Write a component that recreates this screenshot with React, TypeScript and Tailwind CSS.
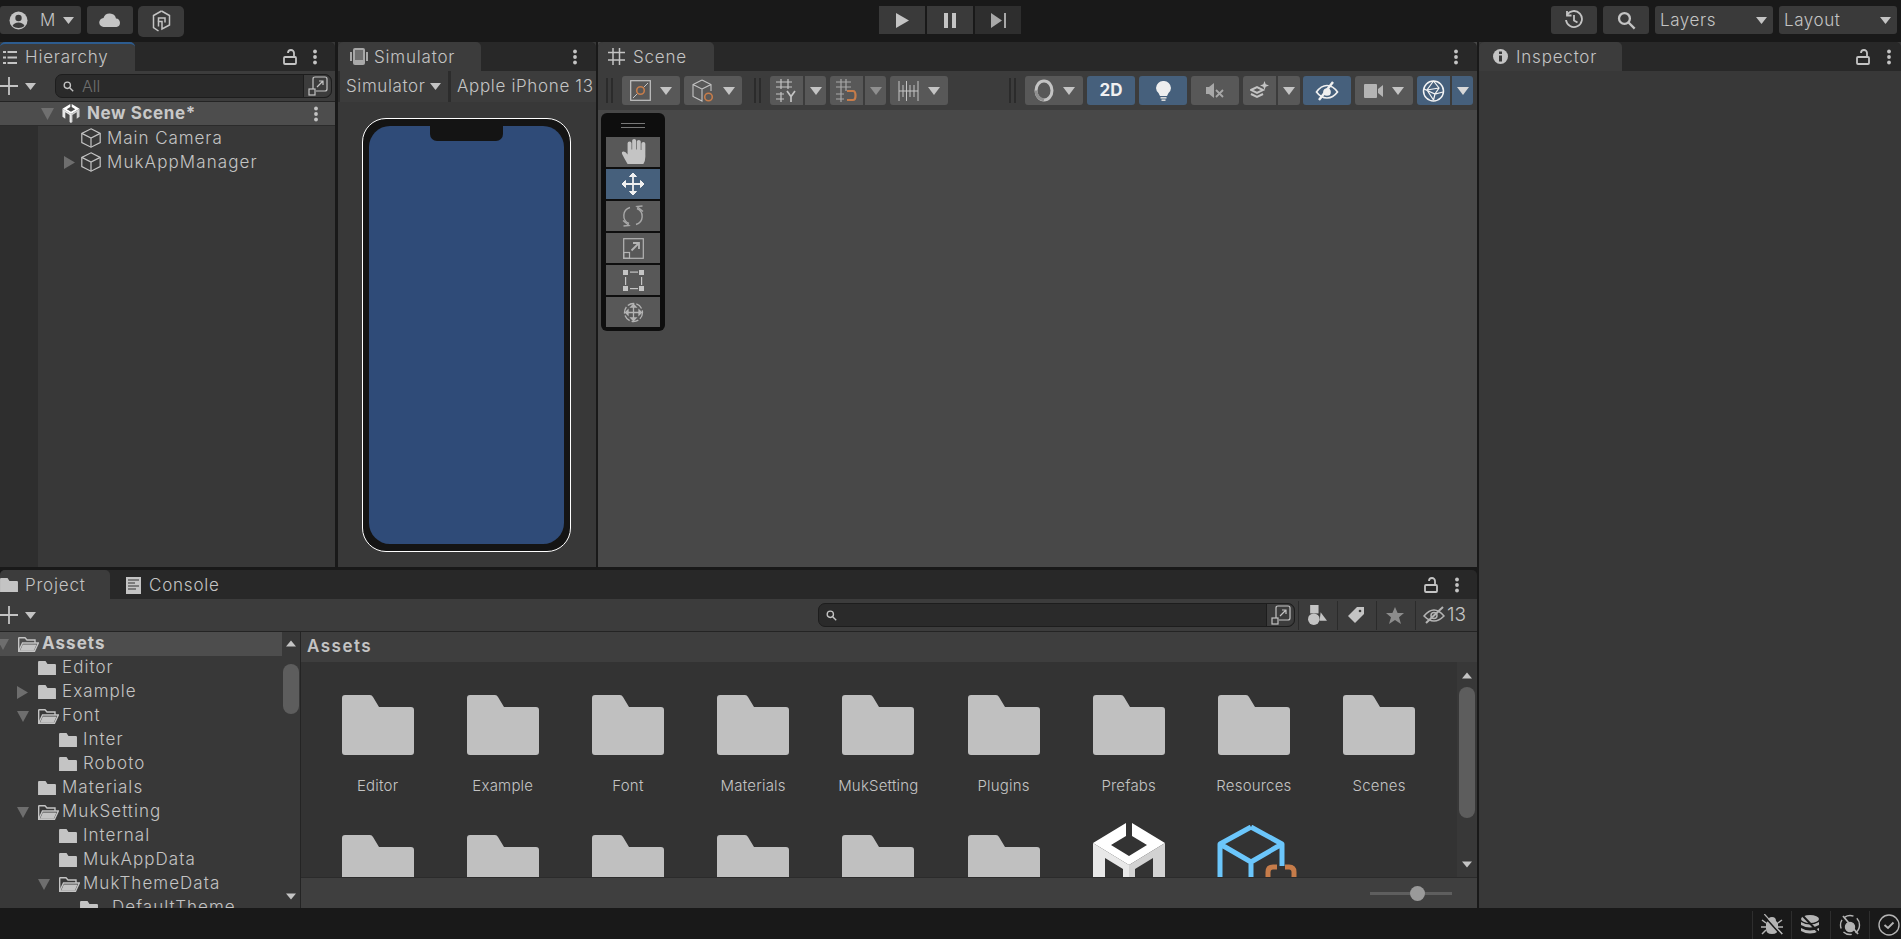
import React from 'react';

const Down = ({ c = '#c4c4c4', w = 11, h = 7, className = '' }: { c?: string; w?: number; h?: number; className?: string }) => (
  <svg width={w} height={h} viewBox="0 0 10 6" preserveAspectRatio="none" className={'shrink-0 ' + className}><path d="M0 0H10L5 6Z" fill={c} /></svg>
);
const Right = ({ c = '#6e6e6e' }: { c?: string }) => (
  <svg width="11" height="13" viewBox="0 0 11 13" className="shrink-0"><path d="M0 0V13L11 6.5Z" fill={c} /></svg>
);
const Lock = () => (
  <svg width="14" height="16" viewBox="0 0 14 16" fill="none" stroke="#c4c4c4" strokeWidth="1.8" className="shrink-0">
    <rect x="1" y="8" width="12" height="7" rx="1" />
    <path d="M11 8V4a3 3 0 0 0-6 0" />
  </svg>
);
const Dots = () => (
  <svg width="6" height="16" viewBox="0 0 6 16" fill="#c4c4c4" className="shrink-0">
    <circle cx="3" cy="2.5" r="1.9" /><circle cx="3" cy="8" r="1.9" /><circle cx="3" cy="13.5" r="1.9" />
  </svg>
);
const TabActions = ({ mr, lock = true, gap = 'gap-[16px]' }: { mr: string; lock?: boolean; gap?: string }) => (
  <div className={'ml-auto flex items-center ' + gap + ' ' + mr}>
    {lock && <Lock />}
    <Dots />
  </div>
);
const Plus = () => (
  <svg width="18" height="18" viewBox="0 0 18 18" stroke="#c4c4c4" strokeWidth="1.8" className="shrink-0"><path d="M0 9H18M9 0V18" /></svg>
);
const Folder = ({ s = 18 }: { s?: number }) => (
  <svg width={s} height={s * 0.83} viewBox="0 0 18 15" className="shrink-0">
    <path d="M0 1.2Q0 0 1 0H7.5L9.5 3H17Q18 3 18 4V14Q18 15 17 15H1Q0 15 0 14Z" fill="#c4c4c4" />
  </svg>
);
const FolderOpen = () => (
  <svg width="21" height="15" viewBox="0 0 21 15" fill="none" stroke="#c4c4c4" strokeWidth="1.4" className="shrink-0">
    <path d="M.7 14V1.2Q.7.7 1.3.7H7L9 3H17V6" />
    <path d="M.7 14.3 4.5 6H20.3L16.5 14.3Z" />
    <path d="M2 13.8 4.8 7.5H18.5L15.8 13.8Z" fill="#c4c4c4" stroke="none" />
  </svg>
);
const BigFolder = () => (
  <svg width="72" height="60" viewBox="0 0 72 60" className="shrink-0">
    <path d="M0 3Q0 0 3 0H28Q30 0 31 2L37 12H69Q72 12 72 15V57Q72 60 69 60H3Q0 60 0 57Z" fill="#c0c0c0" />
  </svg>
);
const Cube = () => (
  <svg width="20" height="20" viewBox="0 0 20 20" fill="none" stroke="#c4c4c4" strokeWidth="1.2" className="shrink-0">
    <path d="M10 .8 19.2 5.4V14.6L10 19.2.8 14.6V5.4Z" /><path d="M.8 5.4 10 10 19.2 5.4M10 10V19.2" />
  </svg>
);
const UnityLogo = ({ className = '' }: { className?: string }) => (
  <svg viewBox="0 0 72 80" className={className}>
    <path d="M0 20 33 0V13L18 22 36 33 54 22 39 13V0L72 20 36 42Z" fill="#fff" />
    <path d="M0 20 36 42V80L30 76V46L12 35V62L0 54Z" fill="#e8e8e8" />
    <path d="M72 20 36 42V80L42 76V46L60 35V62L72 54Z" fill="#d2d2d2" />
  </svg>
);
const Search = ({ s = 14 }: { s?: number }) => (
  <svg width={s} height={s} viewBox="0 0 14 14" fill="none" stroke="#c4c4c4" strokeWidth="1.7" className="shrink-0">
    <circle cx="5.5" cy="5.5" r="4" /><path d="M8.5 8.5 13 13" />
  </svg>
);
const Expand = () => (
  <svg width="20" height="20" viewBox="0 0 20 20" fill="none" stroke="#c4c4c4" strokeWidth="1.2" className="shrink-0">
    <path d="M5 13V3Q5 1 7 1H17Q19 1 19 3V13Q19 15 17 15H8" /><rect x="1" y="13" width="6" height="6" /><path d="M9 11 15 5M11 5H15V9" />
  </svg>
);
const SearchField = ({ w, text }: { w: string; text?: string }) => (
  <div className={'flex h-[24px] rounded-[7px] border border-[#1d1d1d] bg-[#2a2a2a] ' + w}>
    <div className="flex min-w-0 flex-1 items-center gap-[8px] border-r border-[#1d1d1d] pl-[7px]">
      <Search s={11} />
      {text && <span className="text-[16px] text-[#6f6f6f]">{text}</span>}
    </div>
    <div className="flex w-[27px] items-center justify-center rounded-r-[7px] bg-[#3c3c3c]"><Expand /></div>
  </div>
);
const Tab = ({ w, icon, label, accent = false, pt = 'pt-[2px]' }: { w: string; icon: React.ReactNode; label: string; accent?: boolean; pt?: string }) => (
  <div className={'relative flex h-full items-center rounded-t-[5px] bg-[#3c3c3c] ' + w + ' ' + (accent ? 'border-t-2 border-[#2d5c8f]' : '')}>
    {icon}
    <span className={'text-[17px] tracking-[0.8px] text-[#c4c4c4] ' + pt}>{label}</span>
  </div>
);
const TBtn = ({ w, blue = false, children, rounded = 'rounded-[3px]' }: { w: string; blue?: boolean; children?: React.ReactNode; rounded?: string }) => (
  <div className={'flex h-[29px] shrink-0 items-center justify-center gap-[9px] ' + rounded + ' ' + w + ' ' + (blue ? 'bg-[#46607c]' : 'bg-[#585858]')}>{children}</div>
);
const Grip = ({ className = '' }: { className?: string }) => (
  <div className={'flex h-[25px] w-[7px] shrink-0 justify-between ' + className}>
    <div className="w-[2px] bg-[#2b2b2b]" /><div className="w-[2px] bg-[#2b2b2b]" />
  </div>
);
const TopBtn = ({ w, children, className = '' }: { w: string; children?: React.ReactNode; className?: string }) => (
  <div className={'flex h-[28px] shrink-0 items-center rounded-[3px] bg-[#3a3a3a] ' + w + ' ' + className}>{children}</div>
);
const ProjRow = ({ indent, arrow, open, label, bold, gap = 'ml-[6px]' }: { indent: string; arrow?: 'r' | 'd'; open?: boolean; label: string; bold?: boolean; gap?: string }) => (
  <div className={'flex h-[24px] shrink-0 items-center ' + indent + ' ' + (bold ? 'bg-[#4d4d4d]' : '')}>
    <div className="flex w-[21px] shrink-0 items-center">
      {arrow === 'r' && <Right />}
      {arrow === 'd' && <Down c="#6e6e6e" w={12} h={11} />}
    </div>
    {open ? <FolderOpen /> : <Folder />}
    <span className={'whitespace-nowrap text-[17px] tracking-[1.05px] ' + (open ? 'ml-[3px] ' : gap + ' ') + (bold ? 'font-bold text-[#c8c8c8]' : 'text-[#c4c4c4]')}>{label}</span>
  </div>
);
const OverlayBtn = ({ blue = false, children }: { blue?: boolean; children: React.ReactNode }) => (
  <div className={'flex h-[30px] w-[54px] items-center justify-center ' + (blue ? 'bg-[#46607c]' : 'bg-[#585858]')}>{children}</div>
);
const FolderCell = ({ label }: { label?: string }) => (
  <div className="flex w-[125.2px] shrink-0 flex-col items-center">
    <BigFolder />
    {label && <span className="mt-[20px] whitespace-nowrap text-[15px] tracking-[0.2px] text-[#c4c4c4]">{label}</span>}
  </div>
);
const StatusIcon = ({ children }: { children: React.ReactNode }) => (
  <div className="flex h-[28px] w-[39px] items-center justify-center border-l border-[#2e2e2e]">{children}</div>
);

export default function App() {
  return (
    <div className="flex h-[939px] w-[1901px] flex-col overflow-hidden bg-[#191919] font-['Inter','Liberation_Sans',sans-serif] font-[350]">
      {/* main toolbar */}
      <div className="flex h-[42px] shrink-0 items-start pt-[6px]">
        <TopBtn w="w-[81px]" className="pl-[9px]">
          <svg width="19" height="19" viewBox="0 0 19 19" className="shrink-0">
            <circle cx="9.5" cy="9.5" r="9" fill="#c4c4c4" /><circle cx="9.5" cy="7" r="3.2" fill="#3a3a3a" /><path d="M3.5 15Q5 11.5 9.5 11.5T15.5 15Q13 17 9.5 17T3.5 15Z" fill="#3a3a3a" />
          </svg>
          <span className="ml-[12px] pt-[1px] text-[17px] text-[#c4c4c4]">M</span>
          <Down className="ml-[8px]" />
        </TopBtn>
        <TopBtn w="w-[46px]" className="ml-[6px] justify-center">
          <svg width="22" height="14" viewBox="0 0 22 14"><path d="M5 14A4.5 4.5 0 0 1 4.5 5 6.5 6.5 0 0 1 17 5.5 4.3 4.3 0 0 1 17.5 14Z" fill="#c4c4c4" /></svg>
        </TopBtn>
        <TopBtn w="w-[46px]" className="ml-[5px] h-[31px] justify-center rounded-[5px]">
          <svg width="19" height="23" viewBox="0 0 19 23" fill="none" stroke="#c4c4c4" strokeWidth="1.5">
            <path d="M9.5 1 17.5 5.5V15L10 19V11.5H6.5V16.5" /><path d="M6.5 21 1.5 17.5V5.5L9.5 1" /><path d="M6.5 11.5V8H13V12.5" />
          </svg>
        </TopBtn>
        <div className="ml-[695px] flex gap-[2px]">
          <TopBtn w="w-[46px]" className="justify-center rounded-none"><svg width="15" height="15" viewBox="0 0 15 15"><path d="M1 0V15L14 7.5Z" fill="#c4c4c4" /></svg></TopBtn>
          <TopBtn w="w-[46px]" className="justify-center rounded-none"><svg width="12" height="15" viewBox="0 0 12 15" fill="#c4c4c4"><rect width="4" height="15" /><rect x="8" width="4" height="15" /></svg></TopBtn>
          <div className="flex h-[28px] w-[46px] shrink-0 items-center justify-center bg-[#2e2e2e]"><svg width="15" height="15" viewBox="0 0 15 15" fill="#a8a8a8"><path d="M0 0V15L11 7.5Z" /><rect x="13" width="2" height="15" /></svg></div>
        </div>
        <TopBtn w="w-[46px]" className="ml-[530px] justify-center">
          <svg width="20" height="20" viewBox="0 0 20 20" fill="none" stroke="#c4c4c4" strokeWidth="1.8">
            <path d="M3 5A8 8 0 1 1 2 10" /><path d="M3 1V5.5H7.5" /><path d="M10 5V10.5L13.5 12.5" />
          </svg>
        </TopBtn>
        <TopBtn w="w-[46px]" className="ml-[6px] justify-center"><Search s={19} /></TopBtn>
        <TopBtn w="w-[118px]" className="ml-[6px] justify-between pl-[5px] pr-[6px]">
          <span className="pt-[1px] text-[17px] tracking-[0.6px] text-[#c4c4c4]">Layers</span><Down />
        </TopBtn>
        <TopBtn w="w-[118px]" className="ml-[6px] justify-between pl-[5px] pr-[6px]">
          <span className="pt-[1px] text-[17px] tracking-[0.6px] text-[#c4c4c4]">Layout</span><Down />
        </TopBtn>
      </div>

      <div className="flex h-[866px] shrink-0">
        <div className="flex w-[1477px] shrink-0 flex-col gap-[3px]">
          <div className="flex h-[525px] shrink-0">
            {/* hierarchy */}
            <div className="flex w-[335px] shrink-0 flex-col bg-[#383838]">
              <div className="flex h-[29px] shrink-0 items-center rounded-t-[5px] bg-[#282828]">
                <Tab w="w-[135px]" accent pt="pt-[1px]" icon={
                  <svg width="14" height="13" viewBox="0 0 14 13" fill="#c4c4c4" className="ml-[3px] mr-[8px]"><path d="M0 0H3V2H0ZM4.5 0H14V2H4.5ZM0 5.5H3V7.5H0ZM4.5 5.5H14V7.5H4.5ZM0 11H3V13H0ZM4.5 11H14V13H4.5Z" /></svg>
                } label="Hierarchy" />
                <TabActions mr="mr-[17px]" gap="gap-[15px]" />
              </div>
              <div className="flex h-[31px] shrink-0 items-center border-b border-[#242424] bg-[#3c3c3c]">
                <Plus />
                <Down className="ml-[7px]" />
                <div className="ml-[19px]"><SearchField w="w-[277px]" text="All" /></div>
              </div>
              <div className="flex h-[24px] shrink-0 items-center border-b border-[#2b2b2b] bg-[#4d4d4d] pl-[41px]">
                <Down c="#707070" w={13} h={12} />
                <UnityLogo className="ml-[8px] h-[19px] w-[18px] shrink-0" />
                <span className="ml-[7px] pt-[1px] text-[17px] font-bold tracking-[0.6px] text-[#c8c8c8]">New Scene*</span>
                <div className="ml-auto mr-[16px]"><Dots /></div>
              </div>
              <div className="flex min-h-0 flex-1">
                <div className="w-[38px] shrink-0 bg-[#2e2e2e]" />
                <div className="flex-1">
                  <div className="flex h-[24px] items-center pl-[43px]"><Cube /><span className="ml-[6px] pt-[1px] text-[17px] tracking-[0.95px] text-[#c4c4c4]">Main Camera</span></div>
                  <div className="flex h-[24px] items-center pl-[26px]">
                    <Right /><div className="ml-[6px]"><Cube /></div><span className="ml-[6px] pt-[1px] text-[17px] tracking-[1.1px] text-[#c4c4c4]">MukAppManager</span>
                  </div>
                </div>
              </div>
            </div>
            {/* simulator */}
            <div className="ml-[3px] flex w-[258px] shrink-0 flex-col bg-[#383838]">
              <div className="flex h-[29px] shrink-0 items-center rounded-t-[5px] bg-[#282828]">
                <Tab w="w-[143px]" icon={
                  <svg width="18" height="17" viewBox="0 0 18 17" className="ml-[12px] mr-[6px]"><rect x="3" y="0" width="12" height="17" rx="2" fill="#a8a8a8" /><rect x="5" y="2" width="8" height="10" fill="#707070" /><rect x="0" y="4" width="2" height="9" fill="#a8a8a8" /><rect x="16" y="4" width="2" height="9" fill="#a8a8a8" /></svg>
                } label="Simulator" />
                <TabActions mr="mr-[18px]" lock={false} />
              </div>
              <div className="flex h-[31px] shrink-0 items-stretch gap-[3px] bg-[#2c2c2c] pl-[2px]">
                <div className="flex w-[108px] items-center bg-[#3c3c3c] pl-[6px]">
                  <span className="pt-[1px] text-[17px] tracking-[0.6px] text-[#c4c4c4]">Simulator</span><Down className="ml-[5px]" />
                </div>
                <div className="flex flex-1 items-center overflow-hidden bg-[#3c3c3c] pl-[6px]">
                  <span className="whitespace-nowrap pt-[1px] text-[17px] tracking-[0.65px] text-[#c4c4c4]">Apple iPhone 13</span>
                </div>
              </div>
              <div className="flex flex-1 justify-center pt-[16px]">
                <div className="relative ml-[-1px] h-[434px] w-[209px] rounded-[24px] border border-white bg-[#141414] px-[6px] py-[7px]">
                  <div className="h-full w-full rounded-[21px] bg-[#2f4b78]" />
                  <div className="absolute left-[67px] top-[7px] h-[15px] w-[73px] rounded-b-[7px] bg-[#141414]" />
                </div>
              </div>
            </div>
            {/* scene */}
            <div className="ml-[2px] flex min-w-0 flex-1 flex-col bg-[#484848]">
              <div className="flex h-[29px] shrink-0 items-center rounded-t-[5px] bg-[#282828]">
                <Tab w="w-[116px]" icon={
                  <svg width="17" height="17" viewBox="0 0 17 17" stroke="#c4c4c4" strokeWidth="1.5" className="ml-[10px] mr-[8px]"><path d="M5 0V17M11.5 0V17M0 4.5H17M0 12H17" /></svg>
                } label="Scene" />
                <TabActions mr="mr-[18px]" lock={false} />
              </div>
              <div className="flex h-[39px] shrink-0 items-start bg-[#3c3c3c] pt-[5px]">
                <Grip className="ml-[8px] mt-[2px]" />
                <TBtn w="w-[58px] ml-[9px]">
                  <svg width="21" height="21" viewBox="0 0 21 21" fill="none" className="shrink-0"><rect x=".7" y=".7" width="19.6" height="19.6" stroke="#c4c4c4" strokeWidth="1.2" /><path d="M3 18 18 3" stroke="#c4c4c4" strokeWidth="1" /><circle cx="10.5" cy="10.5" r="3.8" stroke="#c67c4a" strokeWidth="1.6" fill="#585858" /></svg>
                  <Down w={12} h={8} />
                </TBtn>
                <TBtn w="w-[58px] ml-[4px]">
                  <svg width="22" height="24" viewBox="0 0 22 24" fill="none" className="shrink-0"><path d="M10 1 19 5.5V12M10 10 19 5.5M10 1 1 5.5V17.5L10 22V10L1 5.5" stroke="#c4c4c4" strokeWidth="1.1" /><circle cx="16.5" cy="18" r="3.8" stroke="#c67c4a" strokeWidth="1.6" /></svg>
                  <Down w={12} h={8} />
                </TBtn>
                <Grip className="ml-[12px] mt-[2px]" />
                <TBtn w="w-[33px] ml-[9px]" rounded="rounded-l-[3px]">
                  <svg width="21" height="23" viewBox="0 0 21 23" fill="none" stroke="#c4c4c4" strokeWidth="1.2"><path d="M5 0V10M12 0V10M0 3H16M0 8H16M5 13V23M0 15H8M0 20H8" /><path d="M11 12 15 17.5 19 12M15 17.5V23" strokeWidth="1.7" /></svg>
                </TBtn>
                <TBtn w="w-[21px] ml-[2px]" rounded="rounded-r-[3px]"><Down w={12} h={8} /></TBtn>
                <TBtn w="w-[33px] ml-[4px]" rounded="rounded-l-[3px]">
                  <svg width="21" height="23" viewBox="0 0 21 23" fill="none" stroke="#a8a8a8" strokeWidth="1.2"><path d="M5 0V23M10 0V12M0 3H15M0 8H15M0 15H8M0 20H8" /><path d="M11 12H17Q19.5 12 19.5 16.5T17 21H11" stroke="#c67c4a" strokeWidth="2.2" /></svg>
                </TBtn>
                <TBtn w="w-[21px] ml-[2px]" rounded="rounded-r-[3px]"><Down c="#8f8f8f" w={12} h={8} /></TBtn>
                <TBtn w="w-[58px] ml-[4px]">
                  <svg width="21" height="20" viewBox="0 0 21 20" stroke="#c4c4c4" strokeWidth="1" className="shrink-0"><path d="M1 0V20M20 0V20M5 4V16M8.5 0V20M12 4V16M16 4V16M1 10H20" /></svg>
                  <Down w={12} h={8} />
                </TBtn>
                <Grip className="ml-[61px] mt-[2px]" />
                <TBtn w="w-[58px] ml-[9px]">
                  <svg width="20" height="23" viewBox="0 0 20 23" className="shrink-0"><ellipse cx="10" cy="11.5" rx="8" ry="9.5" fill="none" stroke="#c4c4c4" strokeWidth="3" /><path d="M2 11.5Q2 19 10 21" fill="none" stroke="#8f8f8f" strokeWidth="3" /></svg>
                  <Down w={12} h={8} />
                </TBtn>
                <TBtn w="w-[48px] ml-[4px]" blue><span className="text-[17px] font-bold text-[#f0f0f0]">2D</span></TBtn>
                <TBtn w="w-[48px] ml-[4px]" blue>
                  <svg width="15" height="20" viewBox="0 0 15 20"><path d="M7.5 0A7.2 7.2 0 0 1 15 7Q15 9.5 12.5 12L11 15H4L2.5 12Q0 9.5 0 7A7.2 7.2 0 0 1 7.5 0Z" fill="#eeeeee" /><rect x="4.5" y="16" width="6" height="1.6" fill="#d8d8d8" /><rect x="5.5" y="18.4" width="4" height="1.6" fill="#d8d8d8" /></svg>
                </TBtn>
                <TBtn w="w-[48px] ml-[4px]">
                  <svg width="18" height="15" viewBox="0 0 18 15"><path d="M0 4H3L8 0V15L3 11H0Z" fill="#a8a8a8" /><path d="M10 7 17 14M17 7 10 14" stroke="#a8a8a8" strokeWidth="1.8" /></svg>
                </TBtn>
                <TBtn w="w-[33px] ml-[4px]" rounded="rounded-l-[3px]">
                  <svg width="19" height="19" viewBox="0 0 19 19" fill="none" stroke="#c4c4c4" strokeWidth="2"><path d="M1 9 7 6 13 9 7 12ZM1 13 7 16 13 13" /><path d="M14.5 0 15.7 3.3 19 4.5 15.7 5.7 14.5 9 13.3 5.7 10 4.5 13.3 3.3Z" fill="#c4c4c4" stroke="none" /></svg>
                </TBtn>
                <TBtn w="w-[22px] ml-[2px]" rounded="rounded-r-[3px]"><Down w={12} h={8} /></TBtn>
                <TBtn w="w-[48px] ml-[3px]" blue>
                  <svg width="24" height="20" viewBox="0 0 24 20" fill="none" stroke="#f0f0f0" strokeWidth="1.7"><path d="M1.5 11Q6 4.5 12 4.5T22.5 11Q18 17 12 17T1.5 11Z" /><circle cx="12" cy="11" r="3" fill="#f0f0f0" /><path d="M18 1 4 19" strokeWidth="2.4" /></svg>
                </TBtn>
                <TBtn w="w-[58px] ml-[4px]">
                  <svg width="19" height="14" viewBox="0 0 19 14" fill="#b4b4b4" className="shrink-0"><rect width="13" height="14" rx="1" /><path d="M14 5 19 1V13L14 9Z" /></svg>
                  <Down w={12} h={8} />
                </TBtn>
                <TBtn w="w-[33px] ml-[4px]" blue rounded="rounded-l-[3px]">
                  <svg width="23" height="24" viewBox="0 0 23 24" fill="none" stroke="#f4f4f4" strokeWidth="1.5"><circle cx="11.5" cy="12" r="10" /><path d="M11.5 2 5 11 11.5 21M11.5 2 17 9 13 15 11.5 21M2 10 13 15 21 13M5 11 17 9" strokeWidth="1.2" /></svg>
                </TBtn>
                <TBtn w="w-[21px] ml-[2px]" blue rounded="rounded-r-[3px]"><Down c="#d8d8d8" w={12} h={8} /></TBtn>
              </div>
              <div className="flex-1 pl-[3px] pt-[3px]">
                <div className="flex h-[218px] w-[64px] flex-col items-center rounded-[6px] bg-[#0e0e0e]">
                  <div className="flex h-[24px] w-[24px] shrink-0 flex-col justify-center gap-[3px]">
                    <div className="h-px bg-[#787878]" /><div className="h-px bg-[#787878]" />
                  </div>
                  <div className="flex flex-col gap-[2px]">
                    <OverlayBtn>
                      <svg width="25" height="26" viewBox="0 0 19 25" preserveAspectRatio="none" fill="#c4c4c4"><path d="M5 24Q3 20 1 15 0 12 2 12 3.5 12 5 15V4Q5 2.5 6.5 2.5T8 4V10H8.5V1.5Q8.5 0 10 0T11.5 1.5V10H12V2.5Q12 1 13.5 1T15 2.5V10.5H15.5V4.5Q15.5 3 17 3T18.5 4.5V17Q18.5 21 17 24Z" /></svg>
                    </OverlayBtn>
                    <OverlayBtn blue>
                      <svg width="24" height="24" viewBox="0 0 24 24" fill="none" stroke="#f0f0f0" strokeWidth="1.8"><path d="M12 4V20M4 12H20" /><path d="M8.5 4.5 12 1 15.5 4.5ZM8.5 19.5 12 23 15.5 19.5ZM4.5 8.5 1 12 4.5 15.5ZM19.5 8.5 23 12 19.5 15.5Z" fill="#f0f0f0" strokeWidth="1" /></svg>
                    </OverlayBtn>
                    <OverlayBtn>
                      <svg width="22" height="22" viewBox="0 0 22 22" fill="none" stroke="#a8a8a8" strokeWidth="1.4"><path d="M7 18.5A8.5 8.5 0 0 1 8 2.5M15 3.5A8.5 8.5 0 0 1 14 19.5" /><path d="M1 15.5 7 20.5 1.5 21M21 6.5 15 1.5 20.5 1" /></svg>
                    </OverlayBtn>
                    <OverlayBtn>
                      <svg width="21" height="21" viewBox="0 0 21 21" fill="none" stroke="#b4b4b4" strokeWidth="1.2"><rect x=".7" y=".7" width="19.6" height="19.6" /><rect x=".7" y="14.5" width="5.8" height="5.8" /><path d="M8.5 12.5 15.5 5.5" strokeWidth="1.8" /><path d="M10 5H16V11" strokeWidth="1.8" /></svg>
                    </OverlayBtn>
                    <OverlayBtn>
                      <svg width="21" height="21" viewBox="0 0 21 21" fill="#c4c4c4"><rect width="5" height="5" /><rect x="16" width="5" height="5" /><rect y="16" width="5" height="5" /><rect x="16" y="16" width="5" height="5" /><rect x="7" y="1.5" width="8" height="1.2" /><rect x="7" y="18" width="8" height="1.2" /><rect x="2" y="7" width="1.2" height="8" /><rect x="18" y="7" width="1.2" height="8" /></svg>
                    </OverlayBtn>
                    <OverlayBtn>
                      <svg width="23" height="23" viewBox="0 0 23 23" fill="none" stroke="#b4b4b4" strokeWidth="1.3"><circle cx="11.5" cy="11.5" r="9" strokeDasharray="7 2" /><path d="M11.5 4V19M4 11.5H19" /><path d="M9 6 11.5 3.5 14 6ZM9 17 11.5 19.5 14 17ZM6 9 3.5 11.5 6 14ZM17 9 19.5 11.5 17 14Z" fill="#b4b4b4" /></svg>
                    </OverlayBtn>
                  </div>
                </div>
              </div>
            </div>
          </div>

          {/* project */}
          <div className="flex h-[338px] shrink-0 flex-col">
            <div className="flex h-[29px] shrink-0 items-center rounded-t-[5px] bg-[#282828]">
              <Tab w="w-[110px]" pt="pt-[3px]" icon={<div className="mr-[7px] mt-[1px]"><Folder /></div>} label="Project" />
              <svg width="15" height="17" viewBox="0 0 15 17" className="ml-[16px] mt-[2px] shrink-0"><rect width="15" height="17" fill="#c4c4c4" /><path d="M2 3H13M2 6H9M2 9H13M2 12H10" stroke="#333" strokeWidth="1.2" /></svg>
              <span className="ml-[8px] pt-[3px] text-[17px] tracking-[0.8px] text-[#c4c4c4]">Console</span>
              <TabActions mr="mr-[17px]" />
            </div>
            <div className="flex h-[33px] shrink-0 items-center border-b border-[#242424] bg-[#3c3c3c]">
              <Plus />
              <Down className="ml-[7px]" />
              <div className="ml-[782px]"><SearchField w="w-[477px]" /></div>
              <div className="ml-[3px] flex flex-1 items-center gap-[2px]">
                <div className="flex h-[29px] w-[37px] items-center justify-center border-l border-[#2b2b2b]">
                  <svg width="19" height="20" viewBox="0 0 18 19" fill="#c4c4c4"><rect x="2" width="8" height="8" /><circle cx="5.5" cy="13.5" r="5.5" /><path d="M12 7 18 15H11Z" /></svg>
                </div>
                <div className="flex h-[29px] w-[37px] items-center justify-center border-l border-[#2b2b2b]">
                  <svg width="16" height="16" viewBox="0 0 16 16"><path d="M9 0H16V7L7 16 0 9Z" fill="#c4c4c4" /><circle cx="12" cy="4" r="1.3" fill="#3c3c3c" /></svg>
                </div>
                <div className="flex h-[29px] w-[37px] items-center justify-center border-l border-[#2b2b2b]">
                  <svg width="18" height="17" viewBox="0 0 18 17"><path d="M9 0 11.6 6H18L13 10.2 15 17 9 13 3 17 5 10.2 0 6H6.4Z" fill="#8c8c8c" /></svg>
                </div>
                <div className="flex h-[29px] flex-1 items-center gap-[2px] border-l border-[#2b2b2b] pl-[7px]">
                  <svg width="22" height="18" viewBox="0 0 22 18" fill="none" stroke="#b4b4b4" strokeWidth="1.5" className="shrink-0"><path d="M1 10Q6 4 11 4T21 10Q16 15 11 15T1 10Z" /><circle cx="11" cy="9.5" r="3" /><path d="M20 1 3 17" strokeWidth="2" /></svg>
                  <span className="text-[19px] text-[#c4c4c4]">13</span>
                </div>
              </div>
            </div>
            <div className="flex min-h-0 flex-1">
              <div className="flex w-[282px] shrink-0 flex-col overflow-hidden bg-[#383838]">
                <div className="ml-[-3px]"><ProjRow indent="pl-0" arrow="d" open label="Assets" bold /></div>
                <ProjRow indent="pl-[17px]" label="Editor" />
                <ProjRow indent="pl-[17px]" arrow="r" label="Example" />
                <ProjRow indent="pl-[17px]" arrow="d" open label="Font" />
                <ProjRow indent="pl-[38px]" label="Inter" />
                <ProjRow indent="pl-[38px]" label="Roboto" />
                <ProjRow indent="pl-[17px]" label="Materials" />
                <ProjRow indent="pl-[17px]" arrow="d" open label="MukSetting" />
                <ProjRow indent="pl-[38px]" label="Internal" />
                <ProjRow indent="pl-[38px]" label="MukAppData" />
                <ProjRow indent="pl-[38px]" arrow="d" open label="MukThemeData" />
                <ProjRow indent="pl-[59px]" gap="ml-[14px]" label="DefaultTheme" />
              </div>
              <div className="flex w-[19px] shrink-0 flex-col items-center border-r border-[#242424] bg-[#383838] pt-[8px]">
                <svg width="10" height="7" viewBox="0 0 10 6"><path d="M0 6H10L5 0Z" fill="#c4c4c4" /></svg>
                <div className="mt-[17px] h-[50px] w-[16px] rounded-[8px] bg-[#5d5d5d]" />
                <svg width="10" height="7" viewBox="0 0 10 6" className="mt-auto mb-[8px]"><path d="M0 0H10L5 6Z" fill="#c4c4c4" /></svg>
              </div>
              <div className="flex min-w-0 flex-1 flex-col">
                <div className="flex h-[30px] shrink-0 items-center bg-[#3e3e3e] pl-[6px]">
                  <span className="text-[17px] font-semibold tracking-[1.5px] text-[#c4c4c4]">Assets</span>
                </div>
                <div className="flex min-h-0 flex-1">
                  <div className="flex min-w-0 flex-1 flex-col gap-[33px] overflow-hidden bg-[#333333] pl-[14px] pt-[33px]">
                    <div className="flex h-[107px] shrink-0">
                      {['Editor', 'Example', 'Font', 'Materials', 'MukSetting', 'Plugins', 'Prefabs', 'Resources', 'Scenes'].map((l) => <FolderCell key={l} label={l} />)}
                    </div>
                    <div className="flex shrink-0">
                      {[0, 1, 2, 3, 4, 5].map((i) => <FolderCell key={i} />)}
                      <div className="mt-[-12px] flex w-[125.2px] shrink-0 justify-center"><UnityLogo className="h-[80px] w-[72px]" /></div>
                      <div className="mt-[-10px] flex w-[125.2px] shrink-0 justify-center">
                        <svg width="80" height="70" viewBox="0 0 80 70" fill="none" className="ml-[6px] shrink-0">
                          <path d="M34 2 65 19V41M34 2 3 19V70M3 19 34 37 65 19M34 37V70" stroke="#6bc6fb" strokeWidth="5" strokeLinejoin="round" />
                          <path d="M51 52V47Q51 42 56 42H60M68 42H72Q77 42 77 47V52" stroke="#c67c4a" strokeWidth="5" />
                        </svg>
                      </div>
                    </div>
                  </div>
                  <div className="flex w-[20px] shrink-0 flex-col items-center bg-[#383838] pt-[10px]">
                    <svg width="10" height="7" viewBox="0 0 10 6"><path d="M0 6H10L5 0Z" fill="#c4c4c4" /></svg>
                    <div className="mt-[8px] h-[131px] w-[16px] rounded-[8px] bg-[#5d5d5d]" />
                    <svg width="10" height="7" viewBox="0 0 10 6" className="mt-auto mb-[9px]"><path d="M0 0H10L5 6Z" fill="#c4c4c4" /></svg>
                  </div>
                </div>
                <div className="flex h-[31px] shrink-0 items-center border-t border-[#2b2b2b] bg-[#3f3f3f] pl-[1069px]">
                  <div className="relative h-[3px] w-[82px] bg-[#5e5e5e]">
                    <div className="absolute left-[40px] top-[-6px] h-[15px] w-[15px] rounded-full bg-[#9a9a9a]" />
                  </div>
                </div>
              </div>
            </div>
          </div>
        </div>
        {/* inspector */}
        <div className="ml-[2px] flex min-w-0 flex-1 flex-col bg-[#383838]">
          <div className="flex h-[29px] shrink-0 items-center rounded-t-[5px] bg-[#282828]">
            <Tab w="w-[143px]" icon={
              <svg width="15" height="15" viewBox="0 0 15 15" className="ml-[14px] mr-[8px]"><circle cx="7.5" cy="7.5" r="7.5" fill="#c4c4c4" /><rect x="6" y="6.5" width="3" height="6" fill="#383838" /><rect x="6" y="2.5" width="3" height="2.5" fill="#383838" /></svg>
            } label="Inspector" />
            <TabActions mr="mr-[9px]" />
          </div>
        </div>
      </div>

      {/* status bar */}
      <div className="flex flex-1 items-start justify-end pt-[3px]">
        <div className="mr-[-7px] flex">
          <StatusIcon>
            <svg width="22" height="22" viewBox="0 0 22 22">
              <path d="M7 7Q7 3 11 3T15 7L17 9V15Q17 20 11 20T5 15V9Z" fill="#b4b4b4" />
              <path d="M5 9 1 6M5 13H0M5 16 1 20M17 9 21 6M17 13H22M17 16 21 20" stroke="#b4b4b4" strokeWidth="1.5" />
              <path d="M2 1 20 21" stroke="#191919" strokeWidth="1.6" /><path d="M3.3 0 21.3 20" stroke="#b4b4b4" strokeWidth="1.2" />
            </svg>
          </StatusIcon>
          <StatusIcon>
            <svg width="22" height="22" viewBox="0 0 22 22"><ellipse cx="10" cy="5" rx="9" ry="4" fill="#b4b4b4" /><path d="M1 8Q10 13 19 8V11Q10 16 1 11ZM1 14Q10 19 19 14V17Q10 22 1 17Z" fill="#b4b4b4" /><path d="M3 2 21 21" stroke="#191919" strokeWidth="2" /></svg>
          </StatusIcon>
          <StatusIcon>
            <svg width="22" height="22" viewBox="0 0 22 22" fill="none" stroke="#b4b4b4" strokeWidth="1.4"><circle cx="11" cy="11" r="9.5" strokeDasharray="9 4" /><circle cx="11" cy="13" r="4.5" fill="#b4b4b4" /><path d="M4 2 19 20" strokeWidth="1.8" /></svg>
          </StatusIcon>
          <StatusIcon>
            <svg width="22" height="22" viewBox="0 0 22 22" fill="none" stroke="#b4b4b4" strokeWidth="1.4"><circle cx="11" cy="11" r="10" /><path d="M6.5 11 10 14 15.5 8.5" strokeWidth="1.9" /></svg>
          </StatusIcon>
        </div>
      </div>
    </div>
  );
}
